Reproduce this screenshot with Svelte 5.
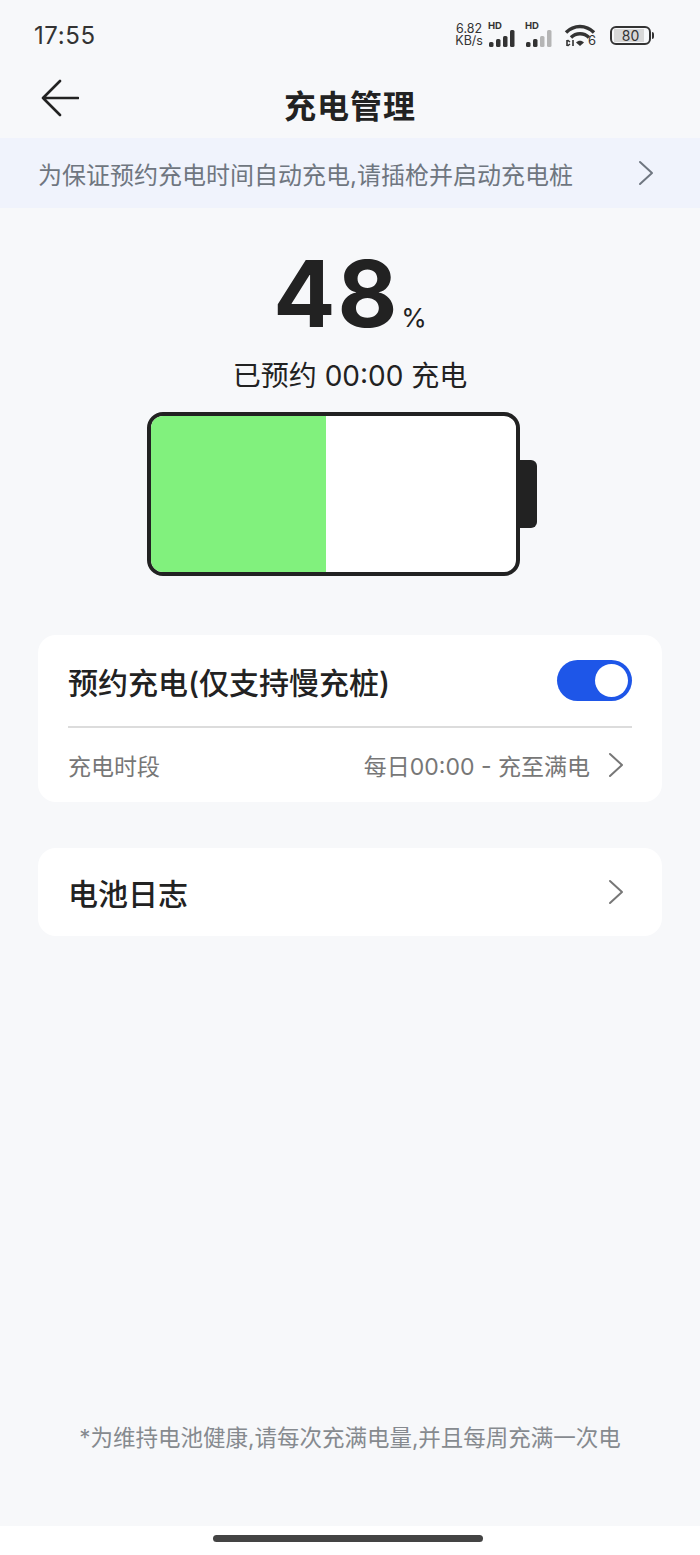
<script lang="ts">
	let percent = 48;
	let startTime = '00:00';
	let enabled = true;
</script>

<div class="page">
	<div class="status-bar">
		<span class="clock">17:55</span>
		<div class="status-icons">
			<div class="speed"><span>6.82</span><span>KB/s</span></div>
			<div class="signal">
				<span class="hd">HD</span>
				<svg width="32" height="17" viewBox="0 0 32 17">
					<rect x="1" y="12" width="4.5" height="5" rx="1.5" fill="#333" />
					<rect x="8" y="9" width="4.5" height="8" rx="1.5" fill="#333" />
					<rect x="15" y="6" width="4.5" height="11" rx="1.5" fill="#333" />
					<rect x="22" y="0" width="4.5" height="17" rx="1.5" fill="#333" transform="translate(0 0)" />
				</svg>
			</div>
			<div class="signal">
				<span class="hd">HD</span>
				<svg width="32" height="17" viewBox="0 0 32 17">
					<rect x="1" y="12" width="4.5" height="5" rx="1.5" fill="#333" />
					<rect x="8" y="9" width="4.5" height="8" rx="1.5" fill="#333" />
					<rect x="15" y="6" width="4.5" height="11" rx="1.5" fill="#b5b5b5" />
					<rect x="22" y="0" width="4.5" height="17" rx="1.5" fill="#b5b5b5" />
				</svg>
			</div>
			<div class="wifi">
				<svg width="32" height="24" viewBox="0 0 32 24" fill="none">
					<path d="M2 9.5C10 1.5 22 1.5 30 9.5" stroke="#333" stroke-width="3.4" />
					<path d="M7 14.5C12 9.5 20 9.5 25 14.5" stroke="#333" stroke-width="3.4" />
					<path d="M12 19.5C14.5 17 17.500 17 20 19.500L16 23Z" fill="#333" />
					<path d="M3 17v6M6 19l-2.500 -2M6 21l-2.500 2M9 17v6" stroke="#333" stroke-width="1.600" />
				</svg>
				<span class="wifi-num">6</span>
			</div>
			<div class="mini-battery">
				<div class="mini-body"><span class="mini-fill"></span><span class="mini-num">80</span></div>
				<span class="mini-cap"></span>
			</div>
		</div>
	</div>

	<header class="title-bar">
		<svg class="back" width="38" height="38" viewBox="0 0 38 38" fill="none">
			<path d="M19 2L2 19L19 36M2 19H37" stroke="#222" stroke-width="2.600" stroke-linecap="round" stroke-linejoin="round" />
		</svg>
		<h1>充电管理</h1>
	</header>

	<div class="notice">
		<span>为保证预约充电时间自动充电,请插枪并启动充电桩</span>
		<svg width="16" height="26" viewBox="0 0 16 26" fill="none">
			<path d="M2 2L14 13L2 24" stroke="#6f7680" stroke-width="2" stroke-linecap="round" stroke-linejoin="round" />
		</svg>
	</div>

	<section class="hero">
		<div class="percent"><span class="num">{percent}</span><span class="unit">%</span></div>
		<p class="scheduled">已预约 {startTime} 充电</p>
		<div class="battery">
			<div class="battery-body">
				<div class="battery-fill" style="width: {percent}%"></div>
			</div>
			<div class="battery-cap"></div>
		</div>
	</section>

	<section class="card">
		<div class="row-main">
			<span class="row-title">预约充电(仅支持慢充桩)</span>
			<div class="toggle" class:on={enabled}><span class="knob"></span></div>
		</div>
		<div class="row-sub">
			<span>充电时段</span>
			<div class="row-value">
				<span>每日00:00 - 充至满电</span>
				<svg width="16" height="26" viewBox="0 0 16 26" fill="none">
					<path d="M2 2L14 13L2 24" stroke="#777" stroke-width="2" stroke-linecap="round" stroke-linejoin="round" />
				</svg>
			</div>
		</div>
	</section>

	<section class="card log">
		<span class="row-title">电池日志</span>
		<svg width="16" height="26" viewBox="0 0 16 26" fill="none">
			<path d="M2 2L14 13L2 24" stroke="#777" stroke-width="2" stroke-linecap="round" stroke-linejoin="round" />
		</svg>
	</section>

	<p class="footnote">*为维持电池健康,请每次充满电量,并且每周充满一次电</p>

	<div class="nav-area"><span class="home-bar"></span></div>
</div>

<style>
	:global(body) {
		margin: 0;
		background: #fff;
	}

	.page {
		height: 1555px;
		display: flex;
		flex-direction: column;
		background: #f7f8fa;
		font-family: Inter, 'Noto Sans CJK SC', sans-serif;
		color: #222;
		overflow: hidden;
	}

	.status-bar {
		height: 70px;
		box-sizing: border-box;
		padding: 0 46px 0 34px;
		display: flex;
		align-items: center;
		justify-content: space-between;
	}

	.clock {
		font-size: 24px;
		letter-spacing: 0.6px;
		color: #333;
	}

	.status-icons {
		display: flex;
		align-items: center;
		gap: 5px;
		color: #333;
	}

	.speed {
		display: flex;
		flex-direction: column;
		font-size: 12.5px;
		line-height: 12px;
		text-align: center;
	}

	.signal {
		position: relative;
		width: 32px;
		height: 24px;
		display: flex;
		align-items: flex-end;
	}

	.hd {
		position: absolute;
		top: -3px;
		left: 0;
		font-size: 9.5px;
		font-weight: 700;
		line-height: 11px;
	}

	.wifi {
		display: flex;
		align-items: flex-end;
		margin-left: 2px;
	}

	.wifi-num {
		font-size: 13px;
		line-height: 13px;
		margin-left: -8px;
	}

	.mini-battery {
		display: flex;
		align-items: center;
		gap: 1px;
		margin-left: 9px;
	}

	.mini-body {
		position: relative;
		width: 41px;
		height: 19px;
		box-sizing: border-box;
		border: 2px solid #333;
		border-radius: 6px;
		display: flex;
		align-items: center;
		justify-content: center;
		overflow: hidden;
	}

	.mini-fill {
		position: absolute;
		left: 2px;
		top: 1px;
		bottom: 1px;
		width: 80%;
		background: #d8d8d8;
	}

	.mini-num {
		position: relative;
		font-size: 14px;
		line-height: 15px;
	}

	.mini-cap {
		width: 2px;
		height: 7px;
		border-radius: 0 2px 2px 0;
		background: #333;
	}

	.title-bar {
		position: relative;
		height: 68px;
		display: flex;
		align-items: center;
		justify-content: center;
	}

	.back {
		position: absolute;
		left: 41px;
		top: 9px;
	}

	h1 {
		margin: 0;
		font-size: 32px;
		font-weight: 600;
		letter-spacing: 1px;
		color: #222;
	}

	.notice {
		height: 70px;
		box-sizing: border-box;
		padding: 0 46px 0 38px;
		display: flex;
		align-items: center;
		justify-content: space-between;
		background: #f0f3fc;
		font-size: 24px;
		color: #6f7680;
	}

	.hero {
		display: flex;
		flex-direction: column;
		align-items: center;
	}

	.percent {
		height: 96px;
		margin-top: 38px;
		display: flex;
		align-items: baseline;
		justify-content: center;
		line-height: 96px;
	}

	.num {
		font-size: 92px;
		font-weight: 700;
		letter-spacing: 2px;
	}

	.unit {
		font-size: 26px;
		margin-left: 2px;
	}

	.scheduled {
		margin: 14px 0 0;
		font-size: 28px;
		line-height: 40px;
	}

	.battery {
		margin-top: 16px;
		margin-left: -16px;
		display: flex;
		align-items: center;
	}

	.battery-body {
		width: 373px;
		height: 164px;
		box-sizing: border-box;
		border: 4px solid #222;
		border-radius: 16px;
		background: #fff;
		overflow: hidden;
	}

	.battery-fill {
		height: 100%;
		background: #81f17d;
	}

	.battery-cap {
		width: 18px;
		height: 68px;
		margin-left: -1px;
		border-radius: 0 6px 6px 0;
		background: #222;
	}

	.card {
		margin: 0 38px;
		background: #fff;
		border-radius: 18px;
	}

	.hero + .card {
		margin-top: 59px;
		height: 167px;
		padding: 0 30px;
	}

	.row-main {
		height: 91px;
		display: flex;
		align-items: center;
		justify-content: space-between;
		border-bottom: 2px solid #dcdcdc;
	}

	.row-title {
		font-size: 30px;
		font-weight: 500;
		color: #222;
	}

	.toggle {
		width: 75px;
		height: 41px;
		box-sizing: border-box;
		padding: 4px;
		border-radius: 21px;
		background: #ccc;
		display: flex;
	}

	.toggle.on {
		background: #1e56e8;
		justify-content: flex-end;
	}

	.knob {
		width: 33px;
		height: 33px;
		border-radius: 50%;
		background: #fff;
	}

	.row-sub {
		height: 74px;
		display: flex;
		align-items: center;
		justify-content: space-between;
		font-size: 23px;
		color: #777;
	}

	.row-value {
		display: flex;
		align-items: center;
		gap: 18px;
		margin-right: 8px;
	}

	.log {
		margin-top: 46px;
		height: 88px;
		padding: 0 38px 0 30px;
		display: flex;
		align-items: center;
		justify-content: space-between;
	}

	.footnote {
		margin: auto 0 0;
		padding-bottom: 71px;
		text-align: center;
		font-size: 22.5px;
		line-height: 34px;
		color: #868a8f;
	}

	.nav-area {
		height: 29px;
		background: #fff;
		display: flex;
		justify-content: center;
		padding-top: 9px;
		box-sizing: border-box;
	}

	.home-bar {
		width: 270px;
		height: 7px;
		margin-left: -4px;
		border-radius: 4px;
		background: #444;
	}
</style>
